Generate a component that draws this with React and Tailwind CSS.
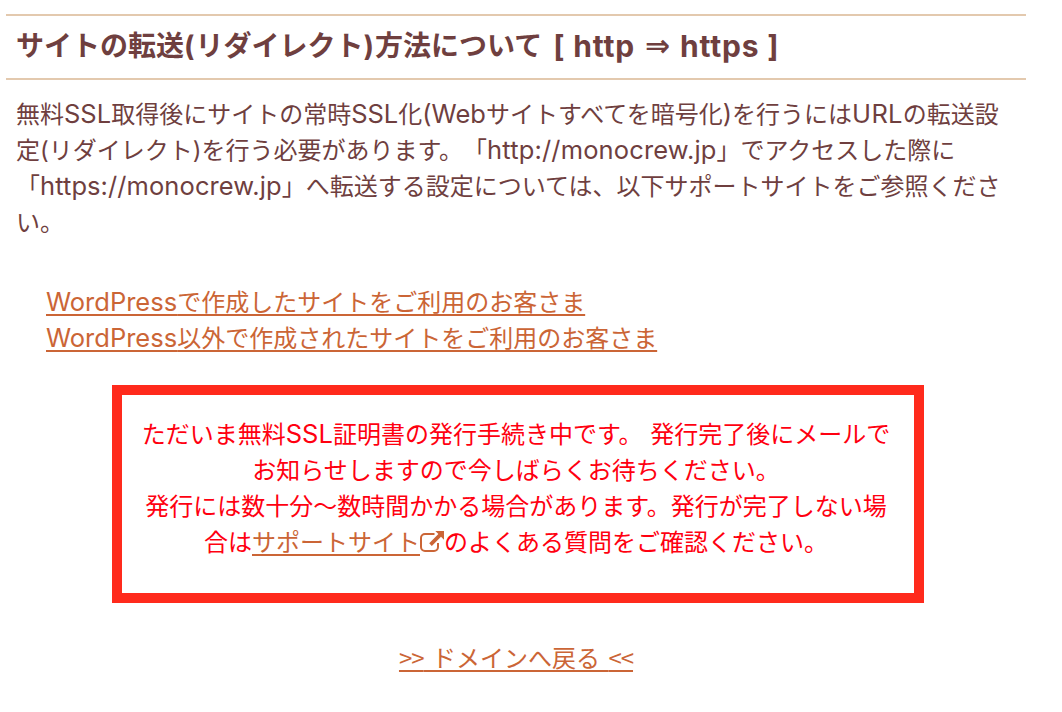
import React from 'react';

const ExternalLinkIcon = () => (
    <svg className="inline-block w-6 h-6 align-[-3px]" viewBox="0 0 24 24" fill="none">
        <path d="M14.5 4H5a4 4 0 0 0-4 4v9a4 4 0 0 0 4 4h9a4 4 0 0 0 4-4v-4" stroke="currentColor" strokeWidth="2" />
        <path d="M15.3 1H24v8.7l-3-3-9.2 9.2-2.6-2.6L18.4 4z" fill="currentColor" />
    </svg>
);

const Link = ({ children }) => (
    <a href="#" className="text-[#cb6536] underline decoration-2 underline-offset-[3px] [text-decoration-skip-ink:none]">
        {children}
    </a>
);

const Latin = ({ children }) => <span className="text-[25.5px] leading-none">{children}</span>;

const App = () => {
    return (
        <div className="h-[712px] overflow-hidden bg-white pl-1.5 pr-9 pt-3.5 whitespace-nowrap text-2xl leading-9 text-[#6f3f3f] font-['Inter','Noto_Sans_CJK_JP',sans-serif] [text-spacing-trim:space-all]">
            <h1 className="flex h-[66px] border-y-2 border-[#e3c9ae] px-2.5 text-[28px] leading-[60px] font-bold">
                <span>サイトの転送<span className="tracking-[0.9px]">(</span>リダイレクト<span className="tracking-[0.9px]">)</span>方法について</span>
                <span className="ml-[11px] flex text-[30px] tracking-[0.8px]">
                    <span>[</span>
                    <span className="ml-2">http</span>
                    <span className="ml-2.5 w-[27px] tracking-normal font-['DejaVu_Sans',sans-serif]">⇒</span>
                    <span className="ml-2">https</span>
                    <span className="ml-2">]</span>
                </span>
            </h1>

            <div className="mt-[17px] px-2.5">
                <p>無料<Latin>SSL</Latin>取得後にサイトの常時<Latin>SSL</Latin>化<Latin>(Web</Latin>サイトすべてを暗号化<Latin>)</Latin>を行うには<span className="tracking-[0.3px]"><Latin>URL</Latin></span>の転送設</p>
                <p>定(リダイレクト)を行う必要があります。「<span className="tracking-[0.15px]"><Latin>http://monocrew.jp</Latin></span>」でアクセスした際に</p>
                <p>「<span className="tracking-[0.08px]"><Latin>https://monocrew.jp</Latin></span>」へ転送する設定については、以下サポートサイトをご参照くださ</p>
                <p>い。</p>
            </div>

            <ul className="mt-11 pl-10">
                <li><Link><Latin>WordPress</Latin>で作成したサイトをご利用のお客さま</Link></li>
                <li><Link><Latin>WordPress</Latin>以外で作成されたサイトをご利用のお客さま</Link></li>
            </ul>

            <div className="mt-7 ml-[106px] w-[812px] h-[218px] border-10 border-[#ff2a1c] pt-[22px] pr-1 text-center text-[#ff0010]">
                <p>ただいま無料<Latin>SSL</Latin>証明書の発行手続き中です。<span className="tracking-[1px]"> </span>発行完了後にメールで</p>
                <p>お知らせしますので今しばらくお待ちください。</p>
                <p>発行には数十分〜数時間かかる場合があります。発行が完了しない場</p>
                <p>合は<Link>サポートサイト</Link><span className="text-[#cb6536]"><ExternalLinkIcon /></span>のよくある質問をご確認ください。</p>
            </div>

            <div className="mt-9 text-center font-['Noto_Sans_CJK_JP',sans-serif] [word-spacing:3px]">
                <Link><span className="tracking-[-1px]">&gt;&gt;</span> ドメインへ戻る <span className="tracking-[-1px]">&lt;&lt;</span></Link>
            </div>
        </div>
    );
};

export default App;
